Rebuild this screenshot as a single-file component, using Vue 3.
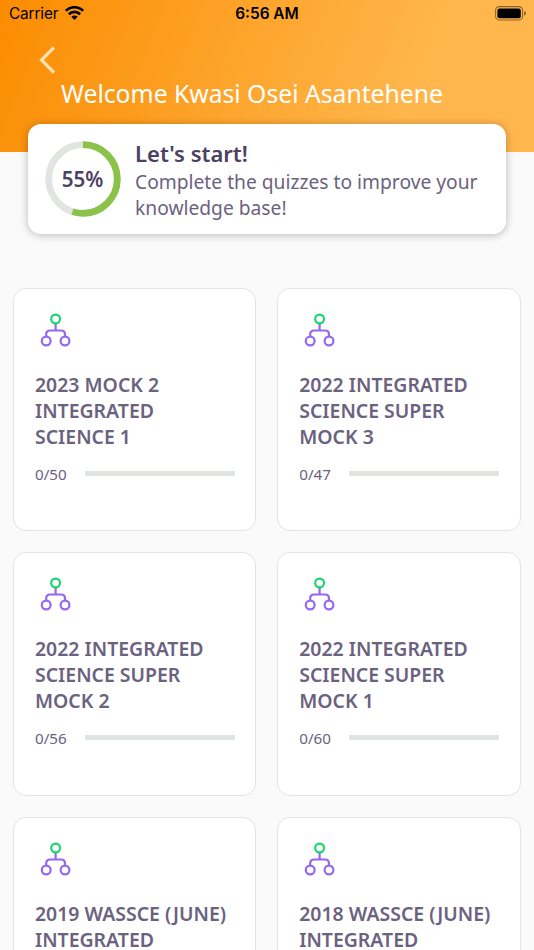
<template>
  <div class="screen">
    <header class="header">
      <div class="status-bar">
        <div class="status-left">
          <span class="carrier">Carrier</span>
          <svg class="wifi" viewBox="0 0 19 14" width="19" height="14">
            <path d="M0.9 4.8 A12.2 12.2 0 0 1 18.1 4.8" />
            <path d="M3.9 8.2 A7.9 7.9 0 0 1 15.1 8.2" />
            <path class="wifi-dot" d="M6.3 10.8 A4.5 4.5 0 0 1 12.7 10.8 L9.5 14 Z" />
          </svg>
        </div>
        <span class="clock">6:56 AM</span>
        <div class="status-right">
          <svg viewBox="0 0 32 15" width="32" height="15">
            <rect x="0.6" y="0.6" width="27" height="13.4" rx="3.8" fill="none" stroke="#000" stroke-opacity="0.45" stroke-width="1.1" />
            <rect x="2.4" y="2.4" width="23.4" height="9.8" rx="2" fill="#000" />
            <path d="M29.2 5 C31.5 5.8 31.5 8.8 29.2 9.6 Z" fill="#000" fill-opacity="0.5" />
          </svg>
        </div>
      </div>
      <button type="button" class="back-btn" aria-label="Back">
        <svg viewBox="0 0 16 28" width="16" height="28">
          <path d="M15 1.5 L2.5 14 L15 26.5" />
        </svg>
      </button>
      <h1 class="welcome">Welcome {{ userName }}</h1>
    </header>

    <section class="summary">
      <div class="ring">
        <svg viewBox="0 0 76 76" width="76" height="76">
          <circle class="ring-track" cx="38" cy="38" r="34.3" />
          <circle
            class="ring-value"
            cx="38"
            cy="38"
            r="34.3"
            pathLength="100"
            :stroke-dasharray="`${percent} 100`"
            transform="rotate(-90 38 38)"
          />
        </svg>
        <span class="ring-label">{{ percent }}%</span>
      </div>
      <div class="summary-text">
        <h2>Let's start!</h2>
        <p>Complete the quizzes to improve your knowledge base!</p>
      </div>
    </section>

    <main class="quiz-grid">
      <article v-for="quiz in quizzes" :key="quiz.title" class="quiz-card">
        <svg class="quiz-icon" viewBox="0 0 32 34" width="32" height="34">
          <path d="M15.6 11 V17.5 M6.2 23 V21.5 Q6.2 17.5 10.2 17.5 H21 Q25 17.5 25 21.5 V23" />
          <circle cx="6.2" cy="28" r="4.4" />
          <circle cx="25" cy="28" r="4.4" />
          <circle class="node-top" cx="15.6" cy="6" r="4.4" />
        </svg>
        <h3>{{ quiz.title }}</h3>
        <div class="progress-row">
          <span class="count">{{ quiz.done }}/{{ quiz.total }}</span>
          <div class="progress">
            <div class="progress-fill" :style="{ width: (quiz.done / quiz.total) * 100 + '%' }"></div>
          </div>
        </div>
      </article>
    </main>
  </div>
</template>

<script setup>
import { ref } from 'vue'

const userName = ref('Kwasi Osei Asantehene')
const percent = ref(55)

const quizzes = ref([
  { title: '2023 MOCK 2 INTEGRATED SCIENCE 1', done: 0, total: 50 },
  { title: '2022 INTEGRATED SCIENCE SUPER MOCK 3', done: 0, total: 47 },
  { title: '2022 INTEGRATED SCIENCE SUPER MOCK 2', done: 0, total: 56 },
  { title: '2022 INTEGRATED SCIENCE SUPER MOCK 1', done: 0, total: 60 },
  { title: '2019 WASSCE (JUNE) INTEGRATED SCIENCE', done: 0, total: 50 },
  { title: '2018 WASSCE (JUNE) INTEGRATED SCIENCE', done: 0, total: 50 }
])
</script>

<style>
body {
  margin: 0;
  overflow: hidden;
}
</style>

<style scoped>
.screen {
  box-sizing: border-box;
  width: 100%;
  height: 950px;
  overflow: hidden;
  background: #fafafa;
  color: #6b6280;
  font-family: "Noto Sans", sans-serif;
}

.header {
  height: 151.5px;
  background: linear-gradient(112deg, #fb8c00 0%, #ffb74d 77.5%);
}

.status-bar {
  display: grid;
  grid-template-columns: 1fr auto 1fr;
  align-items: center;
  height: 27px;
  padding: 0 7px 0 9px;
  color: #000;
  font-family: Inter, sans-serif;
  font-size: 15.4px;
}

.status-left {
  display: flex;
  align-items: center;
  gap: 6.5px;
}

.carrier {
  letter-spacing: -0.15px;
}

.wifi {
  margin-top: -1px;
  fill: none;
  stroke: #000;
  stroke-width: 2.7;
}

.wifi .wifi-dot {
  fill: #000;
  stroke: none;
}

.clock {
  margin-right: 2px;
  font-weight: 600;
}

.status-right {
  display: flex;
  justify-content: flex-end;
}

.back-btn {
  display: block;
  margin: 19px 0 0 39px;
  padding: 0;
  border: 0;
  background: none;
}

.back-btn svg {
  display: block;
  fill: none;
  stroke: #ffe0b2;
  stroke-width: 3.2;
}

.welcome {
  margin: 3px 0 0 61px;
  color: #fff;
  font-size: 24.7px;
  font-weight: 400;
  line-height: 34px;
  white-space: nowrap;
}

.summary {
  position: relative;
  display: flex;
  box-sizing: border-box;
  height: 110px;
  margin: -27.5px 28px 0;
  padding: 17px 16px 0 16.5px;
  border-radius: 13px;
  background: #fff;
  box-shadow: 0 1px 8px rgba(0, 0, 0, 0.27);
}

.ring {
  position: relative;
  flex: none;
  width: 76px;
  height: 76px;
  margin-right: 14.5px;
}

.ring svg {
  display: block;
}

.ring circle {
  fill: none;
  stroke-width: 6.8;
}

.ring .ring-track {
  stroke: #e0e5e2;
}

.ring .ring-value {
  stroke: #8bc34a;
}

.ring-label {
  position: absolute;
  inset: 0;
  display: flex;
  align-items: center;
  justify-content: center;
  color: #4b4162;
  font-size: 20.6px;
  font-weight: 600;
}

.summary-text {
  flex: 1;
}

.summary h2 {
  margin: -2px 0 2px;
  color: #4b4162;
  font-size: 22px;
  font-weight: 600;
  line-height: 28px;
}

.summary p {
  margin: 0;
  font-size: 19.23px;
  line-height: 26px;
}

.quiz-grid {
  display: grid;
  grid-template-columns: 1fr 1fr;
  grid-auto-rows: 243.5px;
  gap: 21px;
  padding: 53.5px 13.5px 0 13px;
}

.quiz-card {
  box-sizing: border-box;
  padding: 24px 20.5px 0 21px;
  border: 1.5px solid #e3e3e7;
  border-radius: 13px;
  background: #fff;
}

.quiz-icon {
  display: block;
  margin-left: 5px;
  fill: none;
  stroke: #9468f0;
  stroke-width: 2.2;
}

.quiz-icon .node-top {
  stroke: #1bd670;
}

.quiz-card h3 {
  margin: 25px 0 0;
  font-size: 19.45px;
  font-weight: 600;
  line-height: 26px;
}

.progress-row {
  display: flex;
  align-items: center;
  margin-top: 12px;
}

.count {
  width: 50px;
  padding-top: 1px;
  font-size: 15.2px;
  line-height: 22px;
}

.progress {
  flex: 1;
  height: 5px;
  background: #e0e5e2;
}

.progress-fill {
  height: 100%;
  background: #8bc34a;
}
</style>
